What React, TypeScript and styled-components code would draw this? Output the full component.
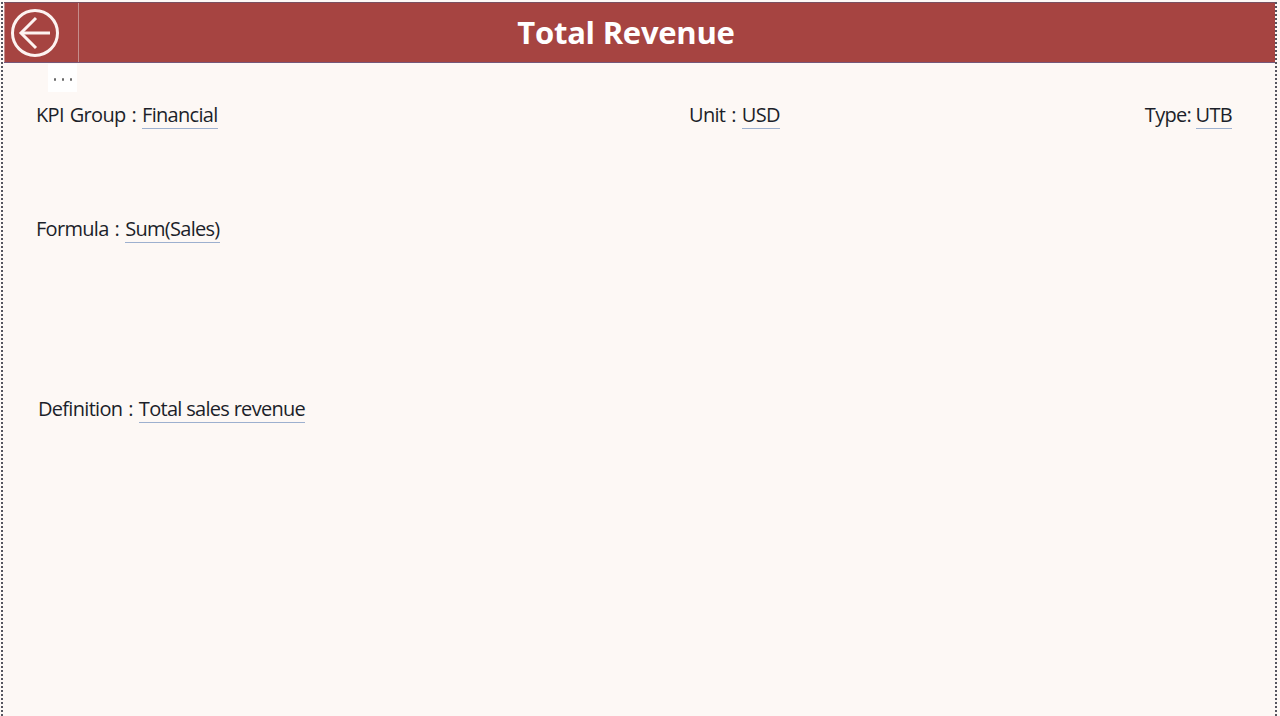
import { createGlobalStyle, styled } from "styled-components";

const GlobalStyle = createGlobalStyle`
    html, body {
        margin: 0;
        padding: 0;
        background: #fdf8f5;
    }
    body {
        font-family: "Open Sans", "Noto Sans", sans-serif;
        overflow: hidden;
    }
`;

const Page = styled.div`
    position: relative;
    box-sizing: border-box;
    width: 1280px;
    height: 716px;
    padding: 2px 3px 0 1px;
    background: #fdf8f5;
`;

const Canvas = styled.div`
    box-sizing: border-box;
    height: 100%;
    padding: 0 0 0 2px;
    border-left: 2px dotted #55555f;
    border-right: 2px dotted #55555f;
`;

const Header = styled.header`
    box-sizing: border-box;
    display: flex;
    height: 61px;
    margin-left: -1px;
    background: #a64441;
    border-top: 1px solid #7a5060;
    border-bottom: 1px solid #75587a;
`;

const BackButton = styled.button`
    flex: none;
    display: flex;
    align-items: center;
    justify-content: center;
    box-sizing: border-box;
    width: 75px;
    height: 59px;
    margin: 0;
    padding: 0 14px 0 0;
    background: transparent;
    border: 0;
    border-right: 1px solid #c58d8b;
    border-left: 1px solid #c58d8b;
`;

const Title = styled.h1`
    flex: 1;
    margin: 0;
    padding-right: 102px;
    color: #ffffff;
    font-size: 31px;
    font-weight: 700;
    line-height: 58px;
    letter-spacing: -0.25px;
    text-align: center;
`;

const MoreTag = styled.div`
    position: absolute;
    top: 64px;
    left: 48px;
    width: 29px;
    height: 28px;
    padding: 3px 0 0 1px;
    box-sizing: border-box;
    display: flex;
    align-items: center;
    justify-content: center;
    gap: 5.5px;
    background: #ffffff;
`;

const Dot = styled.span`
    width: 2.5px;
    height: 2.5px;
    border-radius: 50%;
    background: #6a6a6a;
`;

const Details = styled.main`
    display: flex;
    flex-direction: column;
    padding: 37px 43px 0 31px;
`;

const TopRow = styled.div`
    display: grid;
    grid-template-columns: 653px 1fr auto;
    height: 32px;
`;

const Row = styled.div<{ $gap: number; $indent?: number }>`
    height: 32px;
    margin-top: ${(p) => p.$gap}px;
    margin-left: ${(p) => p.$indent ?? 0}px;
`;

const Field = styled.div<{ $wordGap?: number }>`
    display: inline-flex;
    align-items: flex-start;
    color: #1c1f2a;
    font-size: 20px;
    line-height: 30px;
    letter-spacing: -0.7px;
    word-spacing: ${(p) => p.$wordGap ?? 1.5}px;
    white-space: pre;
`;

const Value = styled.span`
    height: 28px;
    word-spacing: 0;
    border-bottom: 1px solid #9db0cf;
`;

const App = () => {
    return (
        <>
            <GlobalStyle />
            <Page>
                <Canvas>
                    <Header>
                        <BackButton aria-label="Back">
                            <svg width="50" height="50" viewBox="0 0 50 50" fill="none" stroke="#fdf3f1" strokeWidth="3">
                                <circle cx="25" cy="25" r="22.5" />
                                <path d="M40 25H11" />
                                <path d="M26 10 11 25l15 15" />
                            </svg>
                        </BackButton>
                        <Title>Total Revenue</Title>
                    </Header>
                    <Details>
                        <TopRow>
                            <Field>
                                KPI Group : <Value>Financial</Value>
                            </Field>
                            <Field>
                                Unit : <Value>USD</Value>
                            </Field>
                            <Field $wordGap={0}>
                                Type: <Value>UTB</Value>
                            </Field>
                        </TopRow>
                        <Row $gap={82}>
                            <Field>
                                Formula : <Value>Sum(Sales)</Value>
                            </Field>
                        </Row>
                        <Row $gap={148} $indent={2}>
                            <Field>
                                Definition : <Value>Total sales revenue</Value>
                            </Field>
                        </Row>
                    </Details>
                </Canvas>
                <MoreTag>
                    <Dot />
                    <Dot />
                    <Dot />
                </MoreTag>
            </Page>
        </>
    );
};

export default App;
